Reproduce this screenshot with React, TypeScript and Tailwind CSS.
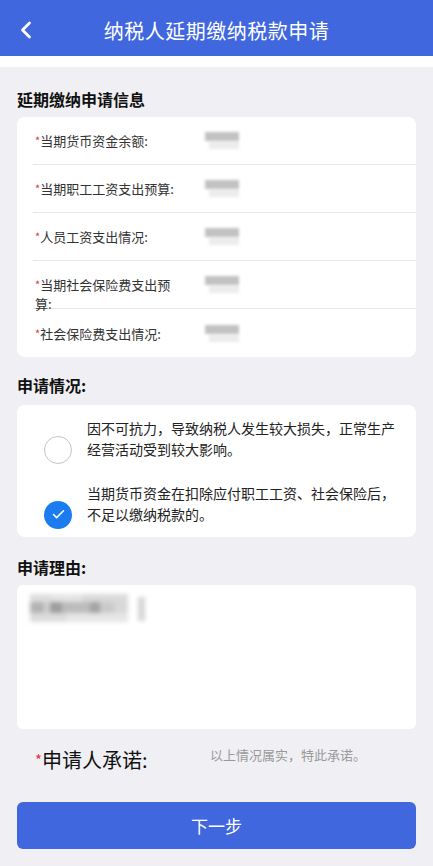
import { ChevronLeft, Check } from "lucide-react";

const infoRows = [
  "当期货币资金余额:",
  "当期职工工资支出预算:",
  "人员工资支出情况:",
  "当期社会保险费支出预算:",
  "社会保险费支出情况:",
];

const options = [
  { text: "因不可抗力，导致纳税人发生较大损失，正常生产经营活动受到较大影响。", checked: false },
  { text: "当期货币资金在扣除应付职工工资、社会保险后，不足以缴纳税款的。", checked: true },
];

function BlurValue() {
  // masked amount in the screenshot
  return (
    <div className="flex flex-col gap-[1px] blur-[1.5px]">
      <div className="w-[34px] h-[9px] bg-[#c2c2c2]" />
      <div className="w-[30px] h-[7px] ml-[4px] bg-[#ececec]" />
    </div>
  );
}

export default function App() {
  return (
    <div className="min-h-screen bg-[#f0f0f4] font-['Noto_Sans_CJK_SC','Noto_Sans',sans-serif] text-[#222]">
      {/* Top bar */}
      <header className="h-[56px] bg-[#4167de] flex items-center relative">
        <ChevronLeft className="absolute left-[12px] top-[16px] w-[28px] h-[28px] text-white" strokeWidth={2.4} />
        <h1 className="w-full text-center text-white text-[20px] tracking-[0.5px] pt-[5px]">纳税人延期缴纳税款申请</h1>
      </header>
      <div className="h-[11px] bg-white" />

      <div className="px-[17px]">
        <h2 className="pt-[22px] text-[16px] leading-[20px] font-bold text-[#111]">延期缴纳申请信息</h2>

        <div className="mt-[8px] bg-white rounded-[8px]">
          {infoRows.map((label, i) => (
            <div key={label}>
              <div className={`flex items-center pl-[18px] ${i === infoRows.length - 1 ? "h-[48px]" : "h-[47px]"}`}>
                <div className="w-[148px] h-[19px] text-[13px] leading-[19px] text-[#333]">
                  <span className="text-[#e0334d] text-[11px] align-top">*</span>
                  {label}
                </div>
                <div className="ml-[22px]">
                  <BlurValue />
                </div>
              </div>
              {i < infoRows.length - 1 && <div className="ml-[16px] h-px bg-[#e6e6e6]" />}
            </div>
          ))}
        </div>

        <h2 className="mt-[18px] text-[16px] leading-[20px] font-bold text-[#111]">申请情况:</h2>

        <div className="mt-[10px] bg-white rounded-[8px] pt-[13px] pb-[12px] flex flex-col gap-[23px]">
          {options.map((o) => (
            <div key={o.text} className="flex items-end pl-[27px]">
              <div className="h-[21px] flex items-center">
                {o.checked ? (
                  <div className="w-[28px] h-[28px] rounded-full bg-[#1b7cf0] flex items-center justify-center">
                    <Check className="w-[15px] h-[15px] text-white" strokeWidth={2.4} />
                  </div>
                ) : (
                  <div className="w-[28px] h-[28px] rounded-full border border-[#c4c4c4] bg-white" />
                )}
              </div>
              <p className="ml-[15px] w-[312px] text-[14px] leading-[21px] text-[#222]">{o.text}</p>
            </div>
          ))}
        </div>

        <h2 className="mt-[20px] text-[16px] leading-[20px] font-bold text-[#111]">申请理由:</h2>

        <div className="mt-[8px] h-[144px] bg-white rounded-[6px] px-[13px] pt-[9px]">
          <div className="flex items-start blur-[2px]">
            <div className="flex flex-col">
              <div className="flex">
                <div className="w-[22px] h-[8px] bg-[#dedede]" />
                <div className="w-[30px] h-[8px] bg-[#e4e4e4]" />
                <div className="w-[46px] h-[8px] bg-[#dadada]" />
              </div>
              <div className="flex">
                <div className="w-[14px] h-[11px] bg-[#b4b4b4]" />
                <div className="w-[6px] h-[11px] bg-[#d0d0d0]" />
                <div className="w-[12px] h-[11px] bg-[#9e9e9e]" />
                <div className="w-[28px] h-[11px] bg-[#bcbcbc]" />
                <div className="w-[10px] h-[11px] bg-[#a4a4a4]" />
                <div className="w-[14px] h-[11px] bg-[#cacaca]" />
                <div className="w-[14px] h-[11px] bg-[#d8d8d8]" />
              </div>
              <div className="flex">
                <div className="w-[36px] h-[9px] bg-[#dcdcdc]" />
                <div className="w-[62px] h-[9px] bg-[#e6e6e6]" />
              </div>
            </div>
            <div className="ml-[10px] mt-[3px] w-[7px] h-[24px] bg-[#d6d6d6]" />
          </div>
        </div>

        <div className="mt-[17px] flex items-start">
          <div className="pl-[18px] w-[193px] text-[20px] leading-[28px] text-[#111]">
            <span className="text-[#e0334d] text-[15px] align-top">*</span>申请人承诺:
          </div>
          <div className="text-[13px] leading-[18px] text-[#999]">以上情况属实，特此承诺。</div>
        </div>

        <button className="mt-[28px] w-full h-[47px] rounded-[6px] bg-[#4167de] text-white text-[17px]">下一步</button>
      </div>
    </div>
  );
}
